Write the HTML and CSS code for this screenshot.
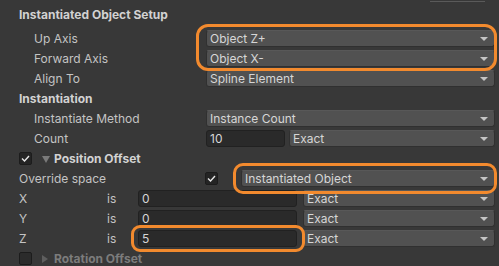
FILE: index.html
```html
<!DOCTYPE html>
<html lang="en">
<head>
    <meta charset="UTF-8">
    <title>Instantiate Inspector</title>
    <link rel="stylesheet" href="styles.css">
</head>
<body>
    <div class="inspector">
        <div class="stub"><div class="stub-box"></div></div>

        <div class="row header first">Instantiated Object Setup</div>
        <div class="row indent">
            <span class="label">Up Axis</span>
            <div class="dropdown"><span>Object Z+</span><i class="arrow"></i></div>
        </div>
        <div class="row indent">
            <span class="label">Forward Axis</span>
            <div class="dropdown"><span>Object X-</span><i class="arrow"></i></div>
        </div>
        <div class="row indent">
            <span class="label">Align To</span>
            <div class="dropdown"><span>Spline Element</span><i class="arrow"></i></div>
        </div>

        <div class="row header">Instantiation</div>
        <div class="row indent">
            <span class="label">Instantiate Method</span>
            <div class="dropdown"><span>Instance Count</span><i class="arrow"></i></div>
        </div>
        <div class="row indent">
            <span class="label">Count</span>
            <div class="field count-field">10</div>
            <div class="dropdown"><span>Exact</span><i class="arrow"></i></div>
        </div>

        <div class="row foldout">
            <span class="checkbox checked">
                <svg width="9" height="7" viewBox="0 0 9 7"><polyline points="1,3.5 3.5,6 8,1" fill="none" stroke="#e6e6e6" stroke-width="1.4"/></svg>
            </span>
            <i class="fold-arrow open"></i>
            <span class="fold-title">Position Offset</span>
        </div>
        <div class="row">
            <span class="label override-label">Override space</span>
            <span class="checkbox checked">
                <svg width="9" height="7" viewBox="0 0 9 7"><polyline points="1,3.5 3.5,6 8,1" fill="none" stroke="#e6e6e6" stroke-width="1.4"/></svg>
            </span>
            <div class="dropdown space-dropdown"><span>Instantiated Object</span><i class="arrow"></i></div>
        </div>
        <div class="row">
            <span class="axis">X</span><span class="is">is</span>
            <div class="field axis-field">0</div>
            <div class="dropdown"><span>Exact</span><i class="arrow"></i></div>
        </div>
        <div class="row">
            <span class="axis">Y</span><span class="is">is</span>
            <div class="field axis-field">0</div>
            <div class="dropdown"><span>Exact</span><i class="arrow"></i></div>
        </div>
        <div class="row">
            <span class="axis">Z</span><span class="is">is</span>
            <div class="field axis-field">5</div>
            <div class="dropdown"><span>Exact</span><i class="arrow"></i></div>
        </div>

        <div class="row foldout disabled">
            <span class="checkbox"></span>
            <i class="fold-arrow closed"></i>
            <span class="fold-title">Rotation Offset</span>
        </div>

        <!-- hand drawn highlight marks -->
        <div class="mark mark-axes"></div>
        <div class="mark mark-space"></div>
        <div class="mark mark-z"></div>
    </div>
</body>
</html>
```

FILE: styles.css
```css
:root {
    --panel-bg: #383838;
    --text-color: #c4c4c4;
    --header-color: #d2d2d2;
    --dropdown-bg: #515151;
    --dropdown-border: #303030;
    --field-bg: #2a2a2a;
    --field-border: #212121;
    --mark-color: #f28a2e;
}

body {
    margin: 0;
    background-color: var(--panel-bg);
    font-family: Inter, 'Noto Sans', sans-serif;
    font-size: 12px;
    color: var(--text-color);
    overflow: hidden;
}
.inspector {
    position: relative;
    width: 499px;
    height: 266px;
}
.stub {
    height: 2px;
    display: flex;
}
.stub-box {
    margin-left: 430px;
    width: 55px;
    height: 1px;
    border-bottom: 1px solid #5a5a5a;
}
.row {
    display: flex;
    align-items: flex-start;
    height: 18px;
    line-height: 18px;
    margin-bottom: 2px;
    padding-left: 19px;
    padding-right: 4px;
    white-space: nowrap;
}
.header {
    font-weight: 700;
    color: var(--header-color);
}
.header.first {
    margin-top: 4px;
    margin-bottom: 6px;
}
.indent {
    padding-left: 34px;
}
.label {
    flex: 0 0 172px;
}
.override-label {
    flex: 0 0 186px;
}
.dropdown {
    flex: 1;
    display: flex;
    align-items: center;
    height: 17px;
    box-sizing: border-box;
    padding: 0 6px 0 3px;
    background-color: var(--dropdown-bg);
    border: 1px solid var(--dropdown-border);
    border-top-color: #585858;
    border-radius: 3px;
    color: #d6d6d6;
    line-height: 15px;
}
.arrow {
    margin-left: auto;
    width: 0;
    height: 0;
    border-left: 4px solid transparent;
    border-right: 4px solid transparent;
    border-top: 4px solid #c4c4c4;
}
.field {
    height: 17px;
    box-sizing: border-box;
    padding-left: 3px;
    background-color: var(--field-bg);
    border: 1px solid var(--field-border);
    border-radius: 3px;
    color: #d6d6d6;
    line-height: 15px;
}
.count-field {
    flex: 0 0 79px;
    margin-right: 4px;
}
.axis {
    flex: 0 0 88px;
}
.is {
    flex: 0 0 31px;
}
.axis-field {
    flex: 0 0 159px;
    margin-right: 6px;
}
.checkbox {
    flex: 0 0 13px;
    height: 13px;
    margin-top: 2px;
    box-sizing: border-box;
    background-color: #242424;
    border: 1px solid #1c1c1c;
    border-radius: 2px;
    display: flex;
    align-items: center;
    justify-content: center;
}
.space-dropdown {
    margin-left: 23px;
}
.fold-arrow {
    width: 0;
    height: 0;
    margin: 6px 4px 0 10px;
}
.fold-arrow.open {
    border-left: 4px solid transparent;
    border-right: 4px solid transparent;
    border-top: 7px solid #7a7a7a;
}
.fold-arrow.closed {
    margin-top: 5px;
    margin-right: 6px;
    border-top: 4px solid transparent;
    border-bottom: 4px solid transparent;
    border-left: 6px solid #5e5e5e;
}
.fold-title {
    font-weight: 700;
    color: var(--header-color);
}
.disabled .fold-title {
    color: #7c7c7c;
}
.disabled .checkbox {
    background-color: #2b2b2b;
}
.mark {
    position: absolute;
    border: 3px solid var(--mark-color);
    border-radius: 12px;
    box-sizing: border-box;
}
.mark-axes {
    left: 196px;
    top: 24px;
    width: 301px;
    height: 47px;
}
.mark-space {
    left: 233px;
    top: 163px;
    width: 264px;
    height: 31px;
    border-radius: 10px;
}
.mark-z {
    left: 131px;
    top: 225px;
    width: 174px;
    height: 27px;
    border-radius: 9px;
}
```
